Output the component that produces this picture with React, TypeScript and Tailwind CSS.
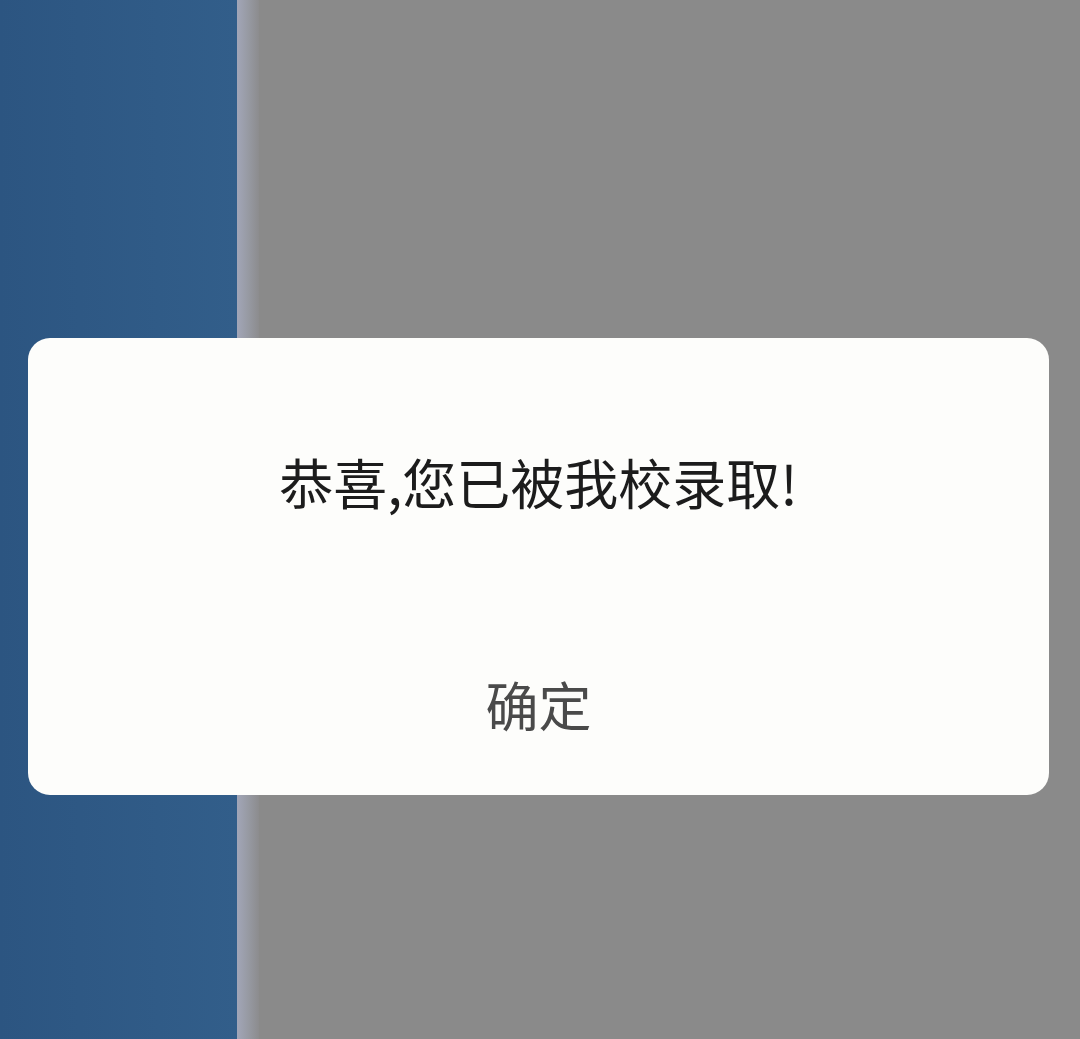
export default function App() {
  return (
    <div className="relative flex h-[1039px] w-[1080px] overflow-hidden">
      {/* background page behind the alert */}
      <div className="h-full w-[237px] bg-gradient-to-r from-[#2c5581] to-[#325e8a]" />
      <div className="h-full w-[22px] bg-gradient-to-r from-[#a2a6b8] via-[#979aa3] to-[#8c8c8e]" />
      <div className="h-full flex-1 bg-[#8a8a8a]" />

      {/* alert dialog */}
      <div className="absolute left-[28px] top-[338px] flex h-[457px] w-[1021px] flex-col items-center rounded-[22px] bg-[#fdfdfb] font-['Noto_Sans_CJK_SC','Noto_Sans',sans-serif]">
        <div className="mt-[108px] text-[54px] leading-[72px] text-[#1c1c1c]">
          恭喜,您已被我校录取!
        </div>
        <button className="mt-[150px] text-[53px] leading-[72px] text-[#4a4a4a]">
          确定
        </button>
      </div>
    </div>
  );
}
